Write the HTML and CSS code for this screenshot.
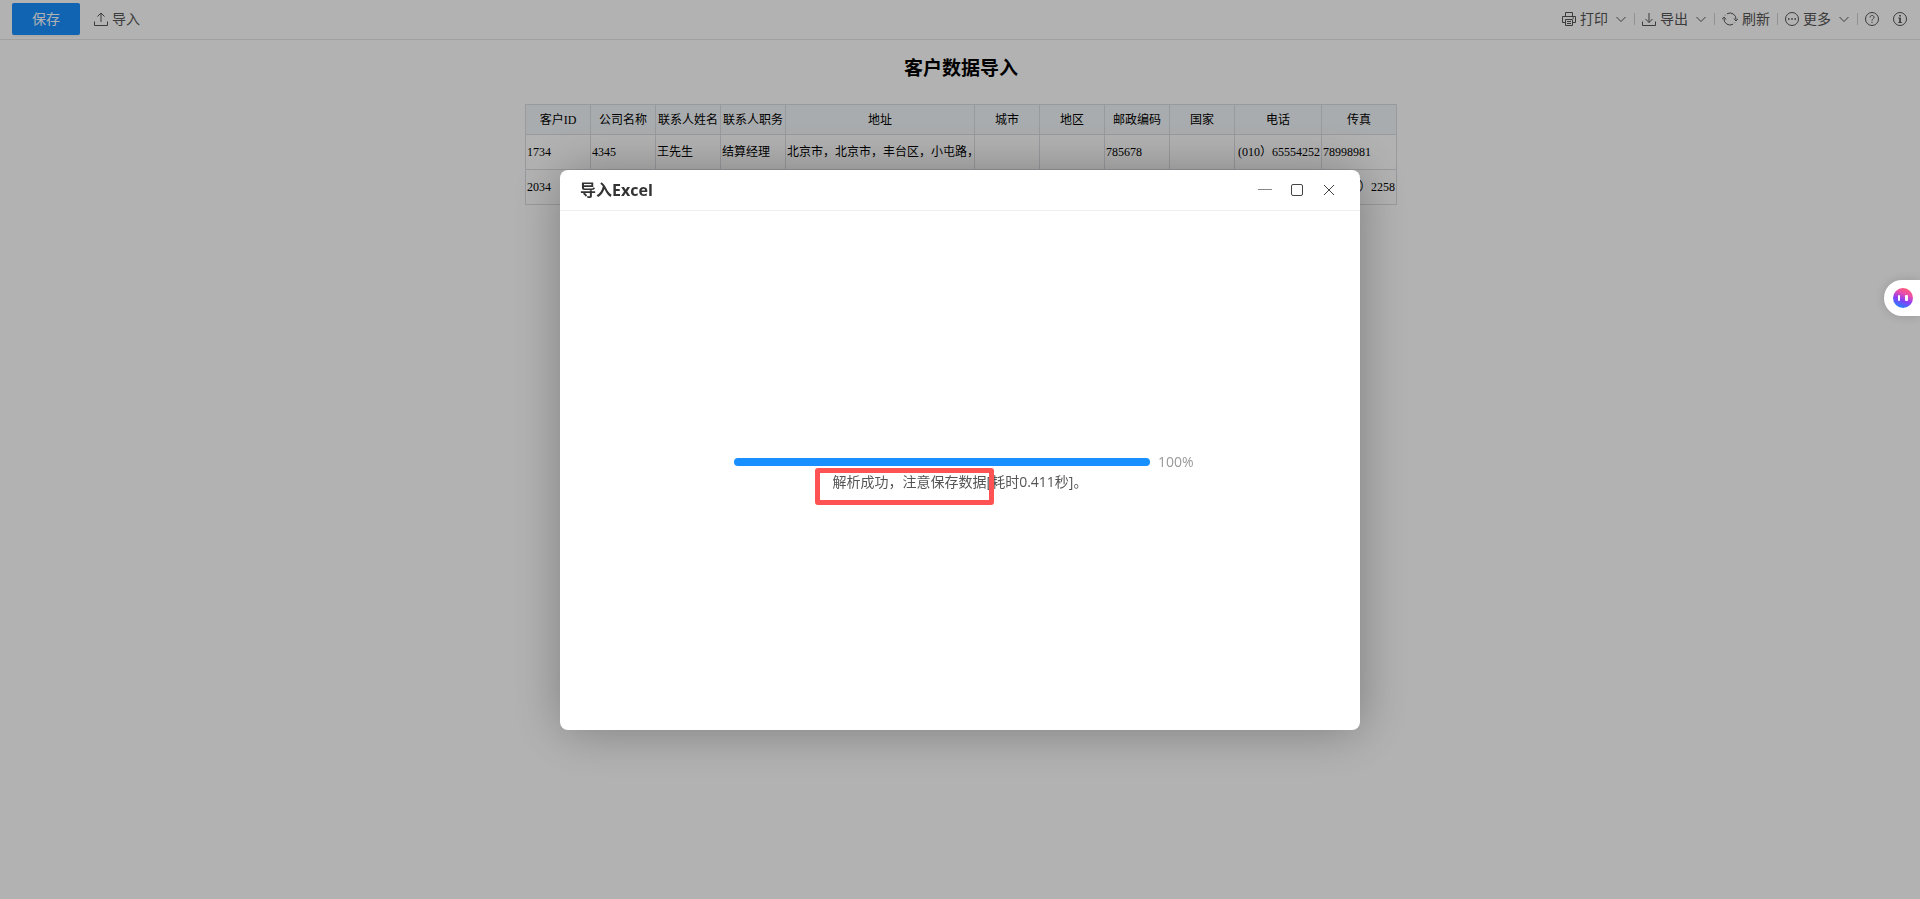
FILE: index.html
```html
<!DOCTYPE html>
<html lang="zh-CN">
<head>
    <meta charset="UTF-8">
    <meta name="viewport" content="width=device-width, initial-scale=1.0">
    <title>客户数据导入</title>
    <link rel="stylesheet" href="styles.css">
</head>
<body>
    <header class="toolbar">
        <div class="toolbar-left">
            <button type="button" class="btn-primary">保存</button>
            <button type="button" class="tool">
                <svg class="icon" viewBox="0 0 14 14"><path d="M7 10V1M3.5 4.500L7 1l3.500 3.500M.5 9.500v4h13v-4"/></svg>
                导入
            </button>
        </div>
        <div class="toolbar-right">
            <button type="button" class="tool">
                <svg class="icon" viewBox="0 0 14 14"><path d="M3.500 4V.5h7V4M3.500 10.500h-3v-6h13v6h-3M3.500 7.500h7v6h-7zM5 9.500h4M5 11.500h4M10.500 6h1.500"/></svg>
                打印
                <svg class="arrow" viewBox="0 0 10 10"><path d="M.5 3L5 7.500 9.500 3"/></svg>
            </button>
            <span class="divider"></span>
            <button type="button" class="tool">
                <svg class="icon" viewBox="0 0 14 14"><path d="M7 1v9.500M3.500 7L7 10.500 10.500 7M.5 9.500v4h13v-4"/></svg>
                导出
                <svg class="arrow" viewBox="0 0 10 10"><path d="M.5 3L5 7.500 9.500 3"/></svg>
            </button>
            <span class="divider"></span>
            <button type="button" class="tool">
                <svg class="icon icon-refresh" viewBox="0 0 16 14"><path d="M5 1.800A6 6 0 0 1 14 7.500M11 12.200A6 6 0 0 1 2 6.500M12 6.500l2 2.500 2-2.500M0 7.500L2 5l2 2.500M3.200 3.400l.5-.6M12.800 10.600l-.5.6"/></svg>
                刷新
            </button>
            <span class="divider"></span>
            <button type="button" class="tool">
                <svg class="icon" viewBox="0 0 14 14"><circle cx="7" cy="7" r="6.500"/><path class="dots" d="M3 6.200h1.600v1.600H3zM6.200 6.200h1.600v1.600H6.200zM9.400 6.200H11v1.600H9.400z"/></svg>
                更多
                <svg class="arrow" viewBox="0 0 10 10"><path d="M.5 3L5 7.500 9.500 3"/></svg>
            </button>
            <span class="divider"></span>
            <button type="button" class="tool" aria-label="帮助">
                <svg class="icon" viewBox="0 0 14 14"><circle cx="7" cy="7" r="6.500"/><path d="M5 5.500C5 2.800 9 2.800 9 5.300 9 6.800 7 6.800 7 8.700M7 9.800v1.200"/></svg>
            </button>
            <button type="button" class="tool" aria-label="信息">
                <svg class="icon" viewBox="0 0 14 14"><circle cx="7" cy="7" r="6.500"/><path class="dots" d="M6.200 3h1.700v1.600H6.200zM5.400 5.600h2.500V10h.9v1H5.300v-1h.9V6.500h-.8z"/></svg>
            </button>
        </div>
    </header>

    <main class="report">
        <h1 class="report-title">客户数据导入</h1>
        <table class="report-table">
            <colgroup>
                <col><col><col><col>
                <col class="col-address">
                <col><col><col><col>
                <col class="col-phone">
                <col class="col-fax">
            </colgroup>
            <thead>
                <tr>
                    <th>客户ID</th>
                    <th>公司名称</th>
                    <th>联系人姓名</th>
                    <th>联系人职务</th>
                    <th>地址</th>
                    <th>城市</th>
                    <th>地区</th>
                    <th>邮政编码</th>
                    <th>国家</th>
                    <th>电话</th>
                    <th>传真</th>
                </tr>
            </thead>
            <tbody>
                <tr>
                    <td>1734</td>
                    <td>4345</td>
                    <td>王先生</td>
                    <td>结算经理</td>
                    <td>北京市，北京市，丰台区，小屯路，</td>
                    <td></td>
                    <td></td>
                    <td>785678</td>
                    <td></td>
                    <td class="num-end">(010）65554252</td>
                    <td>78998981</td>
                </tr>
                <tr>
                    <td>2034</td>
                    <td></td>
                    <td></td>
                    <td></td>
                    <td></td>
                    <td></td>
                    <td></td>
                    <td></td>
                    <td></td>
                    <td></td>
                    <td class="num-end">）2258</td>
                </tr>
            </tbody>
        </table>
    </main>

    <!-- 导入弹窗 -->
    <div class="mask">
        <section class="dialog" role="dialog" aria-labelledby="dialog-title">
            <div class="dialog-header">
                <h2 class="dialog-title" id="dialog-title">导入Excel</h2>
                <div class="dialog-actions">
                    <button type="button" class="win-btn" aria-label="最小化">
                        <svg viewBox="0 0 14 14"><path class="min-line" d="M0 6.500h14"/></svg>
                    </button>
                    <button type="button" class="win-btn" aria-label="最大化">
                        <svg viewBox="0 0 14 14"><rect x="1.500" y="1.500" width="11" height="11" rx="1.500"/></svg>
                    </button>
                    <button type="button" class="win-btn" aria-label="关闭">
                        <svg viewBox="0 0 14 14"><path d="M2 2l10 10M12 2L2 12"/></svg>
                    </button>
                </div>
            </div>
            <div class="dialog-body">
                <div class="progress">
                    <div class="progress-track"><div class="progress-bar" style="width: 100%"></div></div>
                    <span class="progress-text">100%</span>
                </div>
                <p class="message">解析成功，注意保存数据[耗时0.411秒]。<span class="highlight"></span></p>
            </div>
        </section>
    </div>

    <button type="button" class="assistant" aria-label="助手">
        <svg viewBox="0 0 20 20">
            <defs>
                <linearGradient id="face" x1="0.700" y1="0" x2="0.300" y2="1">
                    <stop offset="0" stop-color="#ff5a6e"/>
                    <stop offset="0.300" stop-color="#e94fb0"/>
                    <stop offset="0.600" stop-color="#8a3ff5"/>
                    <stop offset="1" stop-color="#1a86ff"/>
                </linearGradient>
            </defs>
            <circle cx="10" cy="10" r="10" fill="url(#face)"/>
            <rect x="5" y="7" width="2" height="6" rx="1" fill="#fff"/>
            <rect x="12" y="7" width="3" height="6" rx="1" fill="#fff"/>
        </svg>
    </button>
</body>
</html>
```
FILE: styles.css
```css
* {
    box-sizing: border-box;
}

body {
    margin: 0;
    min-height: 100vh;
    background: #fff;
    color: #555;
    font-family: "Open Sans", "Noto Sans CJK SC", sans-serif;
    font-size: 14px;
    line-height: 20px;
}

button {
    margin: 0;
    padding: 0;
    border: none;
    background: none;
    color: inherit;
    font: inherit;
    cursor: pointer;
}

svg {
    display: block;
    flex: none;
    fill: none;
    stroke: currentColor;
}

/* 顶部工具栏 */
.toolbar {
    display: flex;
    align-items: center;
    justify-content: space-between;
    height: 40px;
    padding: 0 6px 2px 12px;
    border-bottom: 1px solid #e6e6e6;
}

.toolbar-left,
.toolbar-right {
    display: flex;
    align-items: center;
}

.toolbar-left {
    gap: 7px;
}

.btn-primary {
    width: 68px;
    height: 32px;
    border-radius: 2px;
    background: #1890ff;
    color: #fff;
    box-shadow: 0 2px 0 rgba(0, 0, 0, 0.04);
}

.tool {
    display: flex;
    align-items: center;
    gap: 4px;
    padding: 0 7px;
    white-space: nowrap;
}

.icon {
    width: 14px;
    height: 14px;
}

.icon-refresh {
    width: 16px;
}

.arrow {
    width: 10px;
    height: 10px;
    margin: 0 1px 0 4px;
}

.dots {
    fill: currentColor;
    stroke: none;
}

.divider {
    width: 1px;
    height: 12px;
    background: #d0d0d0;
}

/* 报表 */
.report {
    padding: 16px 0 16px 2px;
}

.report-title {
    margin: 0 0 24px;
    color: #000;
    font-size: 19px;
    font-weight: 700;
    line-height: 24px;
    text-align: center;
}

.report-table {
    width: 872px;
    margin: 0 auto;
    border-collapse: collapse;
    table-layout: fixed;
    color: #000;
    font-family: "Liberation Serif", "Noto Sans CJK SC", serif;
    font-size: 12px;
    line-height: 16px;
}

.report-table col {
    width: 65px;
}

.report-table .col-address {
    width: 189px;
}

.report-table .col-phone {
    width: 87px;
}

.report-table .col-fax {
    width: 75px;
}

.report-table th,
.report-table td {
    height: 35px;
    padding: 0 1px;
    border: 1px solid #dadde2;
    font-weight: 400;
    text-align: left;
    white-space: nowrap;
}

.report-table th {
    height: 30px;
    background: #f3f6f9;
    text-align: center;
}

.report-table .num-end {
    text-align: right;
}

/* 弹窗 */
.mask {
    position: fixed;
    inset: 0;
    display: flex;
    align-items: center;
    justify-content: center;
    background: rgba(0, 0, 0, 0.3);
}

.dialog {
    display: flex;
    flex-direction: column;
    width: 800px;
    max-width: 100%;
    min-height: 560px;
    border-radius: 8px;
    background: #fff;
    box-shadow: 1px 1px 50px rgba(0, 0, 0, 0.3);
}

.dialog-header {
    display: flex;
    align-items: center;
    justify-content: space-between;
    height: 41px;
    padding: 0 24px 0 20px;
    border-bottom: 1px solid #eee;
}

.dialog-title {
    margin: 0;
    color: #333;
    font-size: 16px;
    font-weight: 700;
}

.dialog-actions {
    display: flex;
    gap: 18px;
    color: #444;
}

.win-btn svg {
    width: 14px;
    height: 14px;
}

.min-line {
    stroke: #888;
}

.dialog-body {
    display: flex;
    flex: 1;
    flex-direction: column;
    align-items: center;
    justify-content: center;
    padding-top: 4px;
}

.progress {
    display: flex;
    align-items: center;
    gap: 8px;
    width: 60%;
    padding-left: 14px;
}

.progress-track {
    flex: 1;
    height: 8px;
    border-radius: 4px;
    background: #f5f5f5;
}

.progress-bar {
    height: 100%;
    border-radius: 4px;
    background: #1890ff;
}

.progress-text {
    width: 42px;
    color: #999;
}

.message {
    position: relative;
    margin: 0;
}

.highlight {
    position: absolute;
    top: -4px;
    left: -18px;
    width: 179px;
    height: 37px;
    border: 5px solid #ff5252;
    border-radius: 3px;
}

/* 侧边助手按钮 */
.assistant {
    position: fixed;
    top: 280px;
    right: 0;
    width: 36px;
    height: 36px;
    padding-left: 9px;
    border-radius: 18px 0 0 18px;
    background: #fff;
    box-shadow: 0 0 12px rgba(0, 0, 0, 0.16);
}

.assistant svg {
    width: 20px;
    height: 20px;
    stroke: none;
}
```
